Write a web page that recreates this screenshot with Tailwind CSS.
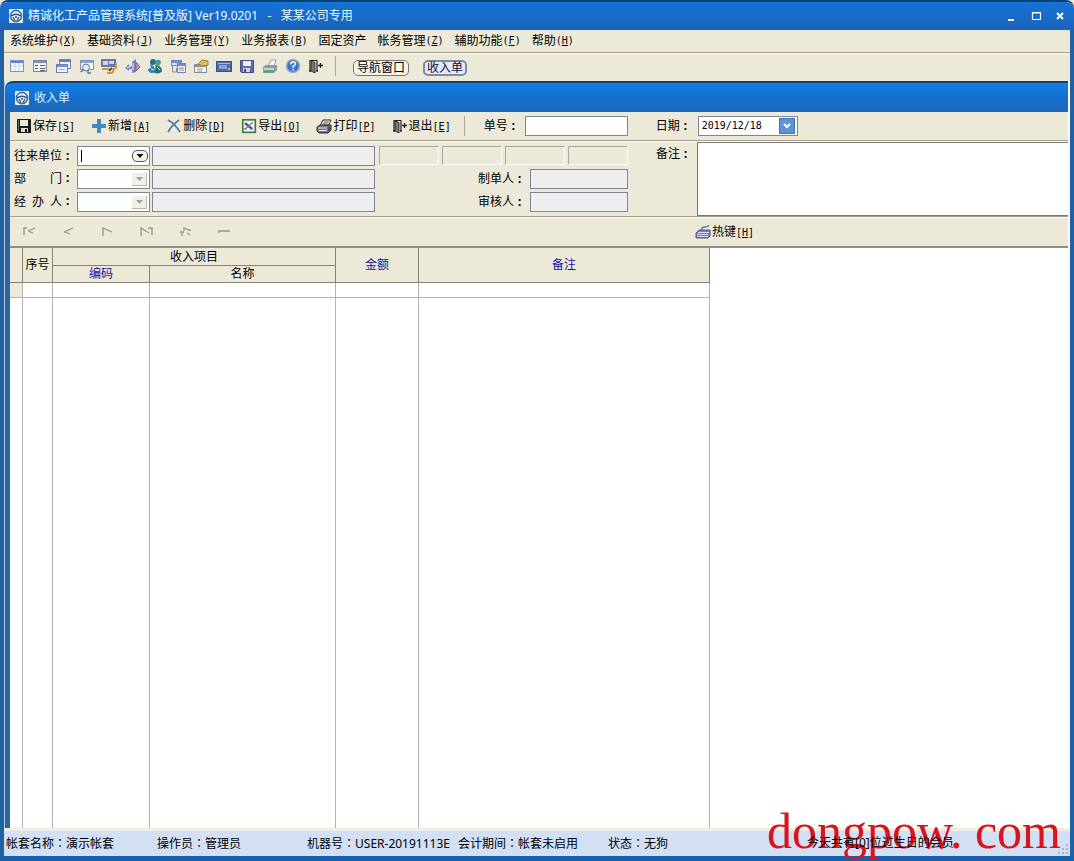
<!DOCTYPE html>
<html lang="zh-CN">
<head>
<meta charset="utf-8">
<title>精诚化工产品管理系统</title>
<script src="https://cdn.jsdelivr.net/npm/@tailwindcss/browser@4"></script>
</head>
<body class="flex h-screen flex-col overflow-hidden rounded-t-lg border-t-2 border-[#0a4376] bg-[#ece9d8] font-['Liberation_Sans','Noto_Sans_CJK_SC',sans-serif] text-[12px] leading-4 text-black">
<svg class="hidden">
  <defs>
    <symbol id="wheel" viewBox="0 0 16 16"><rect x="1" y="1" width="14" height="14" rx="1" fill="#e9f3fb"/><circle cx="8" cy="8" r="5.6" fill="none" stroke="#3b6c9c" stroke-width="1.6"/><path d="M3 8q5-3.4 10 0M5 9l2 3.5M11 9l-2 3.5M7 9h2" fill="none" stroke="#27527f" stroke-width="1.4"/></symbol>
    <symbol id="door" viewBox="0 0 16 16"><path d="M2 13V2.5h7V13" fill="none" stroke="#222" stroke-width="1.2"/><path d="M3 3l4 1.500v10.500L3 13z" fill="#777" stroke="#222" stroke-width=".8"/><path d="M1 13h2M8 13h2M10 7.500h5M12.500 5v5" stroke="#222" stroke-width="1.300"/></symbol>
  </defs>
</svg>

<header class="flex h-7 shrink-0 items-center bg-linear-to-b from-[#1673d6] via-[#176bca] to-[#1e64b8] pr-[6px] pl-2 text-[#e6fbff]">
  <svg class="size-4"><use href="#wheel"/></svg>
  <h1 class="ml-1 grow font-['Noto_Sans','Noto_Sans_CJK_SC',sans-serif] whitespace-pre">精诚化工产品管理系统[普及版] Ver19.0201   -   某某公司专用</h1>
  <div class="flex gap-2">
    <button aria-label="最小化" class="size-4"><svg viewBox="0 0 16 16"><path d="M4 12h6" stroke="#fff" stroke-width="2"/></svg></button>
    <button aria-label="最大化" class="size-4"><svg viewBox="0 0 16 16"><path d="M4.500 4.500h8v7h-8zM4 5h9" fill="none" stroke="#fff" stroke-width="1.200"/></svg></button>
    <button aria-label="关闭" class="size-4"><svg viewBox="0 0 16 16"><path d="M5 5l6 6M11 5l-6 6" stroke="#fff" stroke-width="2"/></svg></button>
  </div>
</header>

<div class="flex min-h-0 grow flex-col border-x-4 border-[#1f62a5] bg-[#ece9d8]">
  <nav class="flex h-[23px] shrink-0 items-center gap-[11px] border-b border-[#a59c8c] pl-[6px] whitespace-nowrap">
    <button class="flex">系统维护<span class="font-['DejaVu_Sans_Mono',monospace] text-[10px]">(<u>X</u>)</span></button>
    <button class="flex">基础资料<span class="font-['DejaVu_Sans_Mono',monospace] text-[10px]">(<u>J</u>)</span></button>
    <button class="flex">业务管理<span class="font-['DejaVu_Sans_Mono',monospace] text-[10px]">(<u>Y</u>)</span></button>
    <button class="flex">业务报表<span class="font-['DejaVu_Sans_Mono',monospace] text-[10px]">(<u>B</u>)</span></button>
    <button>固定资产</button>
    <button class="flex">帐务管理<span class="font-['DejaVu_Sans_Mono',monospace] text-[10px]">(<u>Z</u>)</span></button>
    <button class="flex">辅助功能<span class="font-['DejaVu_Sans_Mono',monospace] text-[10px]">(<u>F</u>)</span></button>
    <button class="flex">帮助<span class="font-['DejaVu_Sans_Mono',monospace] text-[10px]">(<u>H</u>)</span></button>
  </nav>

  <div class="flex h-7 shrink-0 items-center gap-[7px] border-t border-white pb-1 pl-[5px]">
    <button aria-label="窗口" class="size-4"><svg viewBox="0 0 16 16"><rect x="1.500" y="2.500" width="13" height="11" fill="#f5f8fe" stroke="#8090c4"/><path d="M2 4h12" stroke="#6680d0" stroke-width="2"/><path d="M6 5v8M10 5v8M2 8h12" stroke="#cbd6ee"/></svg></button>
    <button aria-label="表单" class="size-4"><svg viewBox="0 0 16 16"><rect x="1.500" y="2.500" width="13" height="11" fill="#f4f5f8" stroke="#80889c"/><path d="M2 4h12" stroke="#7d90b8" stroke-width="2"/><path d="M3 7.500h3M3 10.500h3M8 7.500h5M8 10.500h5M8 12.500h5" stroke="#586274"/></svg></button>
    <button aria-label="多窗口" class="size-4"><svg viewBox="0 0 16 16"><rect x="4.500" y="1.500" width="11" height="9" fill="#eef4fe" stroke="#6d80b5"/><path d="M5 3h10" stroke="#5f80d4" stroke-width="2"/><rect x="1.500" y="6.500" width="11" height="8" fill="#eef4fe" stroke="#6d80b5"/><path d="M2 8h10" stroke="#7590d8" stroke-width="2"/><path d="M4 11.500h6" stroke="#9caed4"/></svg></button>
    <button aria-label="查询" class="size-4"><svg viewBox="0 0 16 16"><rect x="2.500" y="2.500" width="13" height="9" fill="#f4f7fc" stroke="#8290b0"/><path d="M3 4h12" stroke="#8fa3d0" stroke-width="2"/><circle cx="8" cy="9.500" r="3.500" fill="#d5ecf5" stroke="#66788c"/><path d="M5.500 12l-3 2M10 12v3h3" fill="none" stroke="#66788c" stroke-width="1.400"/></svg></button>
    <button aria-label="监控" class="size-4"><svg viewBox="0 0 16 16"><rect x="0" y="1" width="15" height="8" fill="#6678ad"/><path d="M2 3h5v4H2zM8 3h5v3H8z" fill="#c9d6f3"/><path d="M15 5v5l-4 1M1 11h9M6 15h5l3-5" fill="none" stroke="#d49637" stroke-width="1.800"/><path d="M8 13l3-3" stroke="#555" stroke-width="2"/></svg></button>
    <button aria-label="转换" class="size-4"><svg viewBox="0 0 16 16"><path d="M1 10l4-4v2h3V4l4-3v13l-4 1v-4H5v2z" fill="#7180bf"/><path d="M3 10l4-2M9 5v7" stroke="#d8def8" stroke-width="1.300"/><path d="M12 4l4 5-4 4z" fill="#c99a75" stroke="#846c9d"/></svg></button>
    <button aria-label="人员" class="size-4"><svg viewBox="0 0 16 16"><circle cx="6" cy="4" r="3" fill="#2c6e83"/><circle cx="11" cy="4.500" r="2.800" fill="#42998a"/><path d="M3 6c5 2 6 5 3 9-4 0-5-2-5-4l3-1z" fill="#397fb7"/><path d="M8 7c5 0 7 3 7 6-1 3-7 3-9 1 3-3 3-5 2-7z" fill="#256f77"/><path d="M4 11l3 1M10 9l3 3" stroke="#b6ebe3"/></svg></button>
    <button aria-label="布局" class="size-4"><svg viewBox="0 0 16 16"><rect x="1.500" y="2.500" width="10" height="5" fill="#dfe9fc" stroke="#6f83c1"/><rect x="7.500" y="5.500" width="8" height="9" fill="#f0f4fd" stroke="#6f83c1"/><path d="M2 4h9M8 7h7" stroke="#738dd5" stroke-width="2"/><path d="M2.500 8v6h4v-4M9 10h5M9 12h5" fill="none" stroke="#7c8bb0"/></svg></button>
    <button aria-label="属性" class="size-4"><svg viewBox="0 0 16 16"><rect x="1.500" y="6.500" width="12" height="8" fill="#f7f5eb" stroke="#858b99"/><path d="M2 8h11" stroke="#838fb5" stroke-width="2"/><path d="M4 11h6M4 13h5" stroke="#999"/><path d="M5 6l4-4 6 1v4l-5 1z" fill="#e3bc4e" stroke="#a28235"/></svg></button>
    <button aria-label="屏幕" class="size-4"><svg viewBox="0 0 16 16"><rect x=".5" y="3.500" width="15" height="10" fill="#4d6caa" stroke="#3b4f80"/><path d="M2 5.500h12" stroke="#9db8e6"/><path d="M3 7h8v4H3z" fill="#83a3d7"/><path d="M12 11h2" stroke="#fff"/></svg></button>
    <button aria-label="保存" class="size-4"><svg viewBox="0 0 16 16"><path d="M1.500 2.500h13v12h-12l-1-1z" fill="#6569a9" stroke="#484b87"/><path d="M4 3h8v5H4z" fill="#eeeffb"/><path d="M4 10h7v4H4z" fill="#d0d4e8"/><path d="M5 11h2v3H5z" fill="#45476d"/></svg></button>
    <button aria-label="打印" class="size-4"><svg viewBox="0 0 16 16"><path d="M6 8l3-6h5l-2 6z" fill="#fafcff" stroke="#8e9fa9"/><path d="M1 9l3-2h11v5l-3 3H1z" fill="#8c9ca0"/><path d="M2 10h10v2H2z" fill="#c9d3d2"/><path d="M2 13.500h10" stroke="#4ba865" stroke-width="2"/></svg></button>
    <button aria-label="帮助" class="size-4"><svg viewBox="0 0 16 16"><circle cx="8" cy="8" r="6.500" fill="#3c75c8" stroke="#9aa9cb" stroke-width="1.500"/><path d="M5.700 6.500q.2-2.500 2.500-2.500 2.400.1 2.200 2Q10.200 7.500 8 8.500v1.300M8 11v1.500" fill="none" stroke="#fff" stroke-width="1.500"/></svg></button>
    <button aria-label="退出" class="size-4"><svg class="size-4"><use href="#door"/></svg></button>
    <span class="ml-1 h-5 w-px bg-[#aca899]"></span>
    <div class="mt-1 ml-[10px] flex gap-[14px]">
      <button class="flex h-4 w-14 items-center justify-center rounded-[5px] border border-[#737373] bg-[#f5f4ee]">导航窗口</button>
      <button class="flex h-4 w-11 items-center justify-center rounded-[5px] border-2 border-[#7e8ba5] bg-[#e3eaf8] text-[#101040]">收入单</button>
    </div>
  </div>

  <main class="flex min-h-0 grow flex-col border-r-2 border-l border-r-[#f5fbff] border-l-[#b9c6d2]">
    <div class="flex h-[31px] shrink-0 items-center rounded-tl-lg border-t-2 border-[#173f6b] bg-linear-to-b from-[#1280e8] via-[#146fce] to-[#1e67b7] pl-[9px] text-[#d9f6ff]">
      <svg class="size-4"><use href="#wheel"/></svg>
      <h2 class="ml-1">收入单</h2>
    </div>

    <form class="flex min-h-0 grow flex-col border-l-[5px] border-[#2a66a2] bg-[#ece9d8]">
      <div class="flex h-[29px] shrink-0 items-center border-b border-[#a09d8e] pl-[6px] whitespace-nowrap">
        <div class="flex gap-4">
          <button type="button" class="flex items-center gap-px"><svg class="size-4" viewBox="0 0 16 16"><path d="M1 1h14v14H2l-1-1z" fill="#1c1c14"/><path d="M4 2h8v6H4z" fill="#e7e9dc"/><path d="M5 10h7v4H5z" fill="#dcdccc"/><path d="M9 11h2v3H9z" fill="#111"/><path d="M2 2h1v11H2z" fill="#697246"/></svg><span>保存<span class="font-['DejaVu_Sans_Mono',monospace] text-[10px]">[<u>S</u>]</span></span></button>
          <button type="button" class="flex items-center gap-px"><svg class="size-4" viewBox="0 0 16 16"><path d="M8 1v14M1 8h14" stroke="#4389bd" stroke-width="4"/></svg><span>新增<span class="font-['DejaVu_Sans_Mono',monospace] text-[10px]">[<u>A</u>]</span></span></button>
          <button type="button" class="flex items-center gap-px"><svg class="size-4" viewBox="0 0 16 16"><path d="M2 2q7 4 12 12M13 2Q6 7 2 14" fill="none" stroke="#4c7fa9" stroke-width="1.700"/></svg><span>删除<span class="font-['DejaVu_Sans_Mono',monospace] text-[10px]">[<u>D</u>]</span></span></button>
          <button type="button" class="flex items-center gap-px"><svg class="size-4" viewBox="0 0 16 16"><rect x="1.800" y="1.800" width="12.500" height="12.500" fill="#fff" stroke="#397b3b" stroke-width="1.700"/><path d="M4 5l7 6" stroke="#5d5574" stroke-width="2.500"/><path d="M11 5l-7 6M10 5h2M3 11h3M9 11h3" stroke="#8d75a8" stroke-width="1.500"/></svg><span>导出<span class="font-['DejaVu_Sans_Mono',monospace] text-[10px]">[<u>O</u>]</span></span></button>
          <button type="button" class="flex items-center gap-px"><svg class="size-4" viewBox="0 0 16 16"><path d="M4 8l3-6h8l-3 6z" fill="#fff" stroke="#222"/><path d="M7.500 4h5M6.500 6h5" stroke="#444"/><path d="M1 9l3-2h11v5l-3 3H3l-2-2z" fill="#72747e" stroke="#222"/><path d="M2 10h9M3 12.500h8" stroke="#e9e9f3" stroke-width="1.200"/><path d="M13 9v4" stroke="#222"/></svg><span>打印<span class="font-['DejaVu_Sans_Mono',monospace] text-[10px]">[<u>P</u>]</span></span></button>
          <button type="button" class="flex items-center gap-px"><svg class="size-4"><use href="#door"/></svg><span>退出<span class="font-['DejaVu_Sans_Mono',monospace] text-[10px]">[<u>E</u>]</span></span></button>
        </div>
        <span class="ml-[13px] h-5 w-px bg-[#aca899]"></span>
        <label for="no" class="ml-[19px] w-[41px]">单号<b class="pl-[2px] font-['Liberation_Mono',monospace]">:</b></label>
        <input id="no" class="h-5 w-[103px] border border-[#7d8697] bg-white px-1">
        <label for="date" class="ml-7 w-[42px]">日期<b class="pl-[2px] font-['Liberation_Mono',monospace]">:</b></label>
        <div class="flex h-5 w-[100px] items-center border border-[#7d8697] bg-white">
          <input id="date" value="2019/12/18" class="w-20 pl-[3px] font-['DejaVu_Sans_Mono',monospace] text-[10px] outline-none">
          <button type="button" aria-label="选择日期" class="size-4 border border-[#3f73b8] bg-[#5d94d7]"><svg viewBox="0 0 14 14"><path d="M4 5l3 3 3-3" fill="none" stroke="#fff" stroke-width="2"/></svg></button>
        </div>
      </div>

      <div class="flex h-[76px] shrink-0 border-t border-b border-t-white border-b-[#a09d8e] pl-1 whitespace-nowrap">
        <div class="flex w-[361px] flex-col gap-[3px] pt-1">
          <div class="flex h-5 items-center gap-[2px]">
            <label for="unit" class="w-[61px]">往来单位<b class="pl-[2px] font-['Liberation_Mono',monospace]">:</b></label>
            <div class="relative flex h-5 w-[73px] items-center border border-[#7d8697] bg-white">
              <input id="unit" class="w-[54px] pl-[3px] outline-none">
              <span class="absolute top-[3px] left-[3px] h-3 w-px bg-black"></span>
              <button type="button" aria-label="选择往来单位" class="h-3 w-4 rounded-[5px] border border-[#555] bg-[#f3f2ea]"><svg viewBox="0 0 14 10"><path d="M3.500 3h7L7 7z" fill="#111"/></svg></button>
            </div>
            <input aria-label="往来单位名称" readonly class="h-5 w-[223px] border border-[#7d8697] bg-[#eeeeee]">
          </div>
          <div class="flex h-5 items-center gap-[2px]">
            <label for="dept" class="flex w-[61px]"><span class="w-9">部</span>门<b class="pl-[2px] font-['Liberation_Mono',monospace]">:</b></label>
            <div class="relative h-5 w-[73px]">
              <select id="dept" class="h-5 w-full appearance-none border border-[#7d8697] bg-white"><option></option></select>
              <svg class="pointer-events-none absolute top-1 right-[3px] h-[13px] w-[15px] border-r border-b border-[#bdb9ae] bg-[#f0efe8]" viewBox="0 0 14 12"><path d="M4 4h7L7.500 8z" fill="#a3a198"/></svg>
            </div>
            <input aria-label="部门名称" readonly class="h-5 w-[223px] border border-[#7d8697] bg-[#eeeeee]">
          </div>
          <div class="flex h-5 items-center gap-[2px]">
            <label for="agent" class="flex w-[61px]"><span class="w-[18px]">经</span><span class="w-[18px]">办</span>人<b class="pl-[2px] font-['Liberation_Mono',monospace]">:</b></label>
            <div class="relative h-5 w-[73px]">
              <select id="agent" class="h-5 w-full appearance-none border border-[#7d8697] bg-white"><option></option></select>
              <svg class="pointer-events-none absolute top-1 right-[3px] h-[13px] w-[15px] border-r border-b border-[#bdb9ae] bg-[#f0efe8]" viewBox="0 0 14 12"><path d="M4 4h7L7.500 8z" fill="#a3a198"/></svg>
            </div>
            <input aria-label="经办人名称" readonly class="h-5 w-[223px] border border-[#7d8697] bg-[#eeeeee]">
          </div>
        </div>
        <div class="ml-1 flex w-[249px] flex-col gap-[3px] pt-1">
          <div class="flex h-5 gap-[3px]">
            <span class="h-[19px] w-[60px] border border-[#aca899] border-r-white border-b-white"></span>
            <span class="h-[19px] w-[60px] border border-[#aca899] border-r-white border-b-white"></span>
            <span class="h-[19px] w-[60px] border border-[#aca899] border-r-white border-b-white"></span>
            <span class="h-[19px] w-[60px] border border-[#aca899] border-r-white border-b-white"></span>
          </div>
          <div class="flex h-5 items-center justify-end">
            <label for="maker" class="w-[52px]">制单人<b class="pl-[2px] font-['Liberation_Mono',monospace]">:</b></label>
            <input id="maker" readonly class="h-5 w-[98px] border border-[#7d8697] bg-[#eeeeee]">
          </div>
          <div class="flex h-5 items-center justify-end">
            <label for="checker" class="w-[52px]">审核人<b class="pl-[2px] font-['Liberation_Mono',monospace]">:</b></label>
            <input id="checker" readonly class="h-5 w-[98px] border border-[#7d8697] bg-[#eeeeee]">
          </div>
        </div>
        <label for="memo" class="ml-7 w-[41px] pt-1">备注<b class="pl-[2px] font-['Liberation_Mono',monospace]">:</b></label>
        <textarea id="memo" class="h-full grow resize-none border border-r-0 border-[#7a7a72] bg-white p-1 outline-none"></textarea>
      </div>

      <div class="flex h-[31px] shrink-0 items-center border-t border-b-2 border-t-white border-b-[#8d8d86] pl-3 whitespace-nowrap">
        <div class="flex gap-[23px] text-[#98958a]">
          <button type="button" aria-label="首条" class="size-4"><svg viewBox="0 0 16 16" fill="none" stroke="currentColor" stroke-width="1.300"><path d="M2 11V4h3M6 7l7-3M6 7l5 2"/></svg></button>
          <button type="button" aria-label="上一条" class="size-4"><svg viewBox="0 0 16 16" fill="none" stroke="currentColor" stroke-width="1.300"><path d="M3 8l9-4M3 8l6 2"/></svg></button>
          <button type="button" aria-label="下一条" class="size-4"><svg viewBox="0 0 16 16" fill="none" stroke="currentColor" stroke-width="1.300"><path d="M3 12V4l9 4"/></svg></button>
          <button type="button" aria-label="末条" class="size-4"><svg viewBox="0 0 16 16" fill="none" stroke="currentColor" stroke-width="1.300"><path d="M2 12V4l8 5M9 4h4v7"/></svg></button>
          <button type="button" aria-label="插入行" class="size-4"><svg viewBox="0 0 16 16" fill="none" stroke="currentColor" stroke-width="1.300"><path d="M6 3v4M2 8h4M4 12V8M7 4l3 2h3M9 9l3 2"/></svg></button>
          <button type="button" aria-label="删除行" class="size-4"><svg viewBox="0 0 16 16" fill="none" stroke="currentColor" stroke-width="1.300"><path d="M2 9V7h11"/></svg></button>
        </div>
        <button type="button" class="ml-[462px] flex items-center gap-px"><svg class="size-4" viewBox="0 0 16 16"><path d="M7 6q-1-3 3-3 3 0 4-2" fill="none" stroke="#64689c" stroke-width="1.500"/><path d="M1 9l3-3h11v6l-2 2H1z" fill="#7c80b2" stroke="#50548a"/><path d="M3 8.500h11M2 10.500h11M2 12.500h11" stroke="#d7daf2"/></svg><span>热键<span class="font-['DejaVu_Sans_Mono',monospace] text-[10px]">[<u>H</u>]</span></span></button>
      </div>

      <div class="flex min-h-0 grow flex-col bg-white">
        <table class="h-full w-[700px] table-fixed border-separate border-spacing-0 text-center [&_td]:border-r [&_td]:border-[#b5b5b0] [&_th]:border-r [&_th]:border-b [&_th]:border-[#85836f] [&_th]:bg-[#ece9d8] [&_th]:p-0 [&_th]:font-normal">
          <colgroup><col class="w-[13px]"><col class="w-[30px]"><col class="w-[97px]"><col class="w-[186px]"><col class="w-[83px]"><col class="w-[291px]"></colgroup>
          <thead>
            <tr class="h-[18px]">
              <th rowspan="2"></th>
              <th rowspan="2">序号</th>
              <th colspan="2">收入项目</th>
              <th rowspan="2" class="text-[#1212a0]">金额</th>
              <th rowspan="2" class="text-[#1212a0]">备注</th>
            </tr>
            <tr class="h-[17px]"><th class="text-[#1212a0]">编码</th><th>名称</th></tr>
          </thead>
          <tbody>
            <tr class="h-[15px] [&_td]:border-b"><td class="bg-[#ece9d8]"></td><td></td><td></td><td></td><td></td><td></td></tr>
            <tr><td></td><td></td><td></td><td></td><td></td><td></td></tr>
          </tbody>
        </table>
      </div>
    </form>
  </main>

  <footer class="relative flex h-7 shrink-0 items-center border-t-[3px] border-[#efede6] bg-[#d3dff3] pb-px pl-[2px] font-['Noto_Sans','Noto_Sans_CJK_SC',sans-serif] whitespace-nowrap">
    <p class="absolute right-[9px] bottom-0 font-['Liberation_Serif',serif] text-[50px] leading-[50px] text-[#d9141c]">dongpow. com</p>
    <span class="w-[151px]">帐套名称<span lang="zh-TW" class="font-['Noto_Sans_CJK_TC',sans-serif]">：</span>演示帐套</span>
    <span class="w-[150px]">操作员<span lang="zh-TW" class="font-['Noto_Sans_CJK_TC',sans-serif]">：</span>管理员</span>
    <span class="w-[148px] overflow-hidden">机器号<span lang="zh-TW" class="font-['Noto_Sans_CJK_TC',sans-serif]">：</span>USER-20191113E</span>
    <span class="ml-[3px] w-[150px]">会计期间<span lang="zh-TW" class="font-['Noto_Sans_CJK_TC',sans-serif]">：</span>帐套未启用</span>
    <span class="w-[199px]">状态<span lang="zh-TW" class="font-['Noto_Sans_CJK_TC',sans-serif]">：</span>无狗</span>
    <span class="relative">今天共有[0]位过生日的会员</span>
    <svg class="absolute right-px bottom-px size-3" viewBox="0 0 12 12" fill="#a8b4ca"><path d="M9 1h2v2H9zM5 5h2v2H5zM9 5h2v2H9zM1 9h2v2H1zM5 9h2v2H5zM9 9h2v2H9z"/></svg>
  </footer>
</div>
<div class="h-[5px] shrink-0 bg-[#1660ae]"></div>
</body>
</html>
